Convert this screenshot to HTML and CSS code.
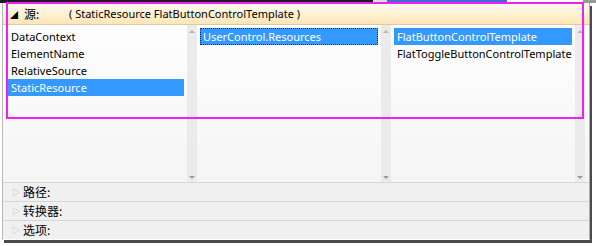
FILE: index.html
```html
<!DOCTYPE html>
<html lang="zh-CN">
<head>
    <meta charset="UTF-8">
    <title>Binding Source</title>
    <link rel="stylesheet" href="styles.css">
</head>
<body>
    <div class="topstrip">
        <span class="seg dark"></span>
        <span class="seg light"></span>
        <span class="seg blue"></span>
        <span class="seg white"></span>
        <span class="seg gray"></span>
    </div>

    <div class="window">
        <div class="header">
            <span class="arrow">&#9698;</span>
            <span class="label">源:</span>
            <span class="value">( StaticResource FlatButtonControlTemplate )</span>
        </div>

        <!-- three source lists -->
        <div class="lists">
            <div class="col">
                <ul class="list">
                    <li>DataContext</li>
                    <li>ElementName</li>
                    <li>RelativeSource</li>
                    <li class="selected">StaticResource</li>
                </ul>
                <div class="scroll"><span class="up"></span><span class="down"></span></div>
            </div>
            <div class="col">
                <ul class="list">
                    <li class="selected focused">UserControl.Resources</li>
                </ul>
                <div class="scroll"><span class="up"></span><span class="down"></span></div>
            </div>
            <div class="col">
                <ul class="list">
                    <li class="selected">FlatButtonControlTemplate</li>
                    <li>FlatToggleButtonControlTemplate</li>
                </ul>
                <div class="scroll"><span class="up"></span><span class="down"></span></div>
            </div>
        </div>

        <div class="expander"><span class="tri">&#9655;</span>路径:</div>
        <div class="expander"><span class="tri">&#9655;</span>转换器:</div>
        <div class="expander"><span class="tri">&#9655;</span>选项:</div>
    </div>

    <!-- annotation box drawn over the screenshot -->
    <div class="highlight"></div>
</body>
</html>
```

FILE: styles.css
```css
body{
    margin: 0;
    width: 596px;
    height: 246px;
    background: #ffffff;
    font-family: "Noto Sans", "Noto Sans CJK SC", sans-serif;
    font-size: 11px;
    color: #000;
    position: relative;
    overflow: hidden;
}
.topstrip{
    display: flex;
    height: 3px;
}
.seg.dark{ width: 373px; background: #1c1a1f; }
.seg.light{ width: 14px; background: #dcdcdc; }
.seg.blue{ width: 120px; background: #3b6fd8; }
.seg.white{ width: 76px; background: #ffffff; }
.seg.gray{ flex: 1; background: #9a9a9a; }

.window{
    margin-left: 2px;
    width: 586px;
    height: 236px;
    border-left: 1px solid #b8b8b8;
    border-right: 1px solid #b0b0b0;
    border-bottom: 1px solid #ffffff;
    box-shadow: 2px 3px 0 #4b4b4b;
    background: linear-gradient(#ffffff, #f2f2f2);
    display: flex;
    flex-direction: column;
}
.header{
    height: 21px;
    display: flex;
    align-items: center;
    background: linear-gradient(#fffcf2, #fde6b6);
    border-bottom: 1px solid #d9c9a6;
    white-space: nowrap;
    font-size: 11px;
}
.header .arrow{
    font-size: 8px;
    width: 8px;
    margin-left: 7px;
    margin-top: 2px;
}
.header .label{
    margin-left: 6px;
    width: 45px;
    font-family: "Noto Sans CJK SC", sans-serif;
    font-size: 12px;
}
.lists{
    display: flex;
    flex: 1;
}
.col{
    width: 194px;
    display: flex;
}
.col:first-child .list{
    padding-left: 5px;
}
.list{
    flex: 1;
    margin: 0;
    padding: 3px 3px 0 3px;
    list-style: none;
}
.list li{
    height: 17px;
    line-height: 17px;
    padding-left: 3px;
    white-space: nowrap;
}
.list li.selected{
    background: #3399ff;
    color: #ffffff;
}
.list li.focused{
    outline: 1px dotted #0a2a70;
    outline-offset: -1px;
}
.scroll{
    width: 10px;
    background: #ebebeb;
    display: flex;
    flex-direction: column;
    justify-content: space-between;
    align-items: center;
    padding: 5px 0 3px;
}
.scroll .up{
    border-left: 3px solid transparent;
    border-right: 3px solid transparent;
    border-bottom: 3px solid #b5b5b5;
}
.scroll .down{
    border-left: 3px solid transparent;
    border-right: 3px solid transparent;
    border-top: 3px solid #9a9a9a;
}
.expander{
    height: 18px;
    line-height: 18px;
    background: #f0f0f0;
    border-top: 1px solid #d6d6d6;
    font-family: "Noto Sans CJK SC", sans-serif;
    font-size: 12px;
    display: flex;
    align-items: center;
}
.expander .tri{
    color: #b0b0b0;
    font-size: 8px;
    width: 8px;
    margin-left: 9px;
    margin-right: 3px;
}
.highlight{
    position: absolute;
    left: 6px;
    top: 2px;
    width: 574px;
    height: 113px;
    border: 2px solid #f020f0;
    pointer-events: none;
}
```
